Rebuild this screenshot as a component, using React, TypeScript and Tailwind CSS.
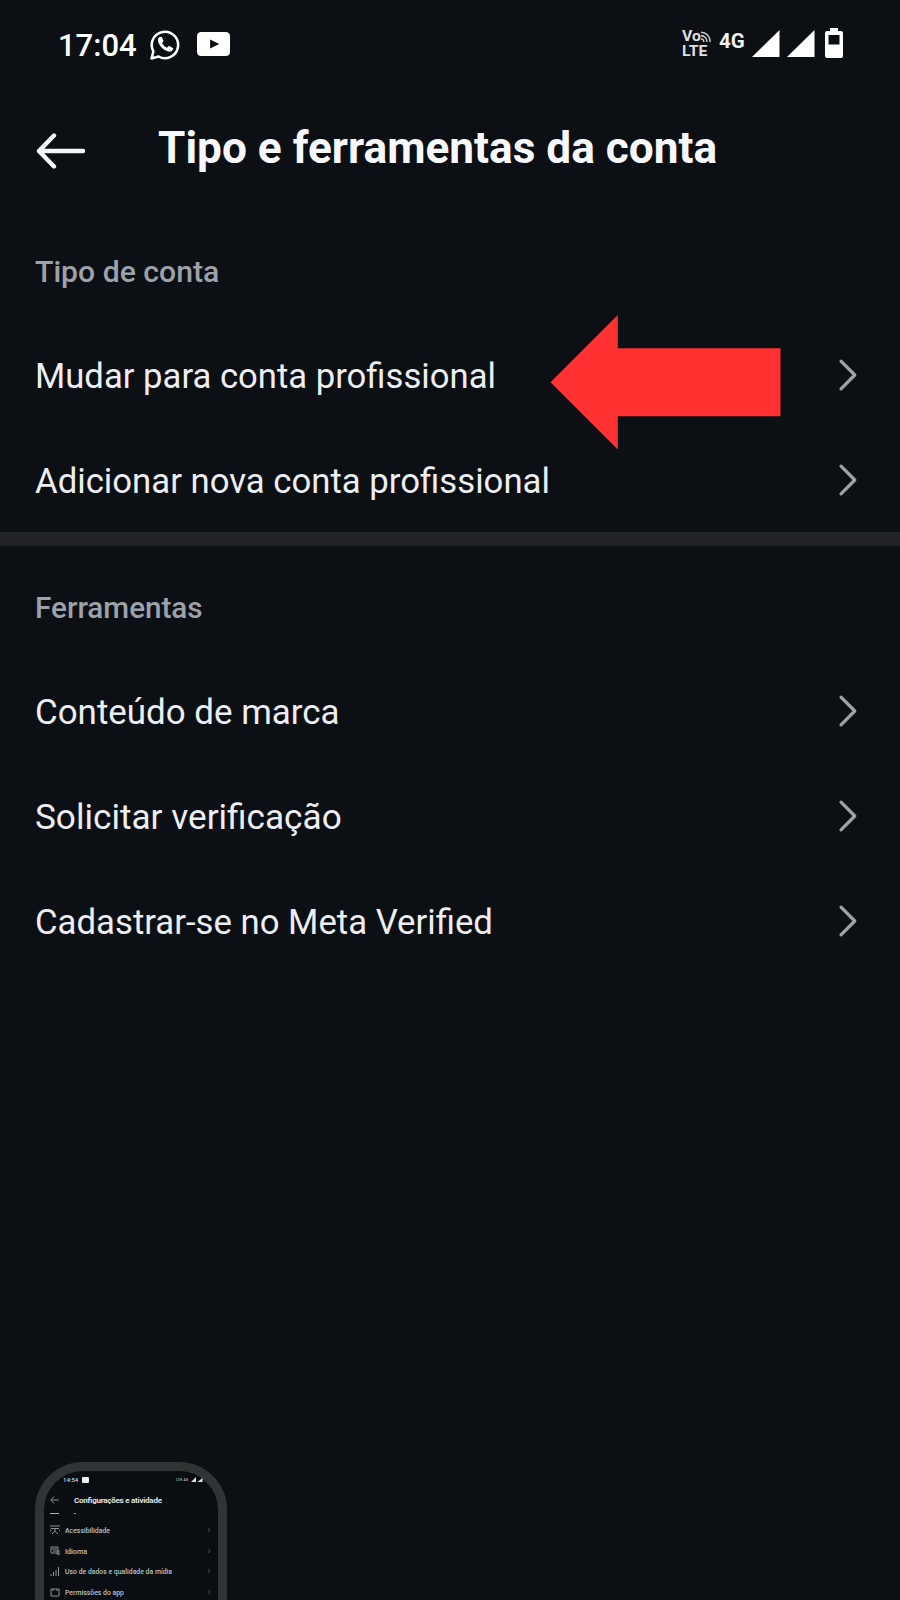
import React from "react";

function Chevron() {
  return (
    <svg className="mb-[1px] h-[34px] w-5 shrink-0" viewBox="0 0 20 34" fill="none">
      <path d="M3 3.2L16.8 17L3 30.8" stroke="#a0a3a6" strokeWidth="3.2" strokeLinecap="round" strokeLinejoin="round" />
    </svg>
  );
}

function Heading({ text, fit }: { text: string; fit: string }) {
  return (
    <h2
      className={`flex h-10 w-max origin-left items-center text-[30px] leading-none font-medium whitespace-nowrap text-[#9da1aa] ${fit}`}
    >
      {text}
    </h2>
  );
}

function Row({ label, fit, children }: { label: string; fit: string; children?: React.ReactNode }) {
  return (
    <li className="relative flex h-[105px] items-center justify-between pr-[42px] pl-[35px]">
      <span className={`origin-left pt-[2px] text-[35.6px] leading-none whitespace-nowrap text-[#eceef1] ${fit}`}>
        {label}
      </span>
      <Chevron />
      {children}
    </li>
  );
}

function PointerArrow() {
  return (
    <svg className="absolute top-[-9px] left-[550px] h-[136px] w-[231px]" viewBox="0 0 231 136">
      <path d="M0.5 68.3L67.8 1V34.3H230.5V102.3H67.8V135.6Z" fill="#ff3131" />
    </svg>
  );
}

function Signal() {
  return (
    <svg className="mb-[3px] h-7 w-7" viewBox="0 0 28 28">
      <path d="M0 27L27.5 0V27Z" fill="#fff" />
    </svg>
  );
}

function StatusBar() {
  return (
    <header className="flex h-[90px] items-center justify-between pr-[57px] pl-[58px] text-white">
      <div className="flex items-center">
        <span className="w-[79px] text-[31px] leading-none font-medium whitespace-nowrap">17:04</span>
        <svg className="mb-[2px] ml-[13px] h-[31px] w-[31px]" viewBox="0 0 31 31" fill="none">
          <path
            d="M1.5 29.5L3.4 22.4A13.2 13.2 0 1 1 8.5 27.5Z"
            stroke="#fff"
            strokeWidth="2.5"
            strokeLinejoin="round"
          />
          <path
            d="M10.5 7.8C8 8.4 7.4 11.4 8.6 14C10.5 18.2 14 21.4 18.3 22.6C20.8 23.3 23.2 21.4 23.2 19.2L19 16.8L16.9 18.8C14.7 17.8 13 16.1 12.1 14.1L13.5 12.1L11.9 8Z"
            fill="#fff"
          />
        </svg>
        <svg className="mb-[2px] ml-[16px] h-6 w-[33px]" viewBox="0 0 34 24" preserveAspectRatio="none">
          <path
            fillRule="evenodd"
            d="M4.5 0H29.5Q34 0 34 4.5V19.5Q34 24 29.5 24H4.5Q0 24 0 19.5V4.5Q0 0 4.5 0ZM13.5 7.5V16.5L23 12Z"
            fill="#fff"
          />
        </svg>
      </div>
      <div className="flex items-center">
        <div className="mr-[8px] mb-[2px] flex w-[29px] origin-left scale-x-[1.13] flex-col text-[14px] leading-[15px] font-bold text-[#dddee0]">
          <div className="flex h-[14px] items-center">
            <span className="w-[16px]">Vo</span>
            <svg className="h-3 w-[10px]" viewBox="0 0 12 12" preserveAspectRatio="none" fill="none" stroke="#c5c7ca" strokeWidth="1.6">
              <path d="M1 1.2C6.5 1.2 10.8 5.5 10.8 11M1 4.6C4.5 4.6 7.4 7.5 7.4 11M1 8C2.7 8 4 9.3 4 11" />
            </svg>
          </div>
          <span>LTE</span>
        </div>
        <span className="mr-[2px] w-[31px] pb-2 text-[20.5px] leading-none font-bold text-[#f0f1f2]">4G</span>
        <Signal />
        <span className="w-[7px]" />
        <Signal />
        <svg className="mb-[4px] ml-[10px] h-[30px] w-[18px]" viewBox="0 0 18 30">
          <path fillRule="evenodd" d="M5 0H13V3H16Q18 3 18 5V28Q18 30 16 30H2Q0 30 0 28V5Q0 3 2 3H5ZM3.5 7V16.5H14.5V7Z" fill="#fff" />
        </svg>
      </div>
    </header>
  );
}

function MiniChevron() {
  return (
    <svg className="h-1.5 w-1" viewBox="0 0 4 6" fill="none" stroke="#4b5055">
      <path d="M1 0.8L3 3L1 5.2" />
    </svg>
  );
}

const miniItems = [
  {
    label: "Acessibilidade",
    width: 45,
    icon: <path d="M0 1H10M1 3.5H9M5 3.5V6M2 9L5 6L8 9M0 4V7M10 4V7" />,
  },
  { label: "Idioma", width: 22, icon: <path d="M1 1H8V7H1ZM2 3H7M3 5H9V9L6 7" /> },
  {
    label: "Uso de dados e qualidade da mídia",
    width: 107,
    icon: <path d="M1 8V10M3.5 6V10M6 4V10M8.5 1V10" />,
  },
  { label: "Permissões do app", width: 59, icon: <path d="M1 2H9V9H1ZM3 2V4M7 2V4" /> },
];

function PhonePreview() {
  return (
    <div className="ml-[35px] h-[138px] w-[192px] shrink-0 overflow-hidden">
      <div className="h-[300px] w-[192px] rounded-[48px] border-[9.5px] border-[#303435] bg-[#0a0d11] text-[#d5d8da]">
        <div className="flex h-[17px] items-center justify-between pr-[15px] pl-[19px]">
          <div className="flex items-center gap-[3px] text-[6px] leading-none font-medium">
            <span className="w-[16px]">14:54</span>
            <span className="h-[6px] w-[7px] rounded-[1px] bg-[#eceeef]" />
          </div>
          <div className="flex items-center gap-px text-[4px] leading-none whitespace-nowrap">
            <span className="w-[14px]">LTE 4G</span>
            <svg className="h-[5px] w-3" viewBox="0 0 12 5" fill="#dfe1e3">
              <path d="M0 5L5 0V5ZM6.5 5L11.5 1V5Z" />
            </svg>
          </div>
        </div>
        <div className="flex h-[24px] items-center pl-[6px]">
          <svg className="h-2 w-2.5" viewBox="0 0 10 8" fill="none" stroke="#858b90">
            <path d="M4 0.5L0.8 4L4 7.5M1 4H9" />
          </svg>
          <svg className="ml-[14px] h-3 w-[90px]" viewBox="0 0 90 12">
            <text x="0" y="8.5" textLength="88" fontSize="8" fontWeight="700" fill="#e1e4e6">
              Configurações e atividade
            </text>
          </svg>
        </div>
        <div className="flex h-[2px] items-center pl-[6px]">
          <span className="h-px w-[9px] bg-[#aeb2b5]" />
          <span className="ml-[15px] h-px w-[2px] bg-[#8d9194]" />
        </div>
        <ul className="mt-[6px]">
          {miniItems.map((item) => (
            <li key={item.label} className="flex h-[20.5px] items-center pr-[7px] pl-[6px]">
              <svg className="h-2.5 w-2.5" viewBox="0 0 10 10" fill="none" stroke="#8d9296">
                {item.icon}
              </svg>
              <svg className="ml-[5px] h-3 w-[120px]" viewBox="0 0 120 12">
                <text
                  x="0"
                  y="8.5"
                  fontSize="7"
                  fontWeight="500"
                  fill="#bdc1c4"
                  textLength={item.width}
                  lengthAdjust="spacingAndGlyphs"
                >
                  {item.label}
                </text>
              </svg>
              <span className="flex-1" />
              <MiniChevron />
            </li>
          ))}
        </ul>
      </div>
    </div>
  );
}

export default function App() {
  return (
    <main className="flex h-[1600px] w-[900px] flex-col overflow-hidden bg-[#0c0f14] font-['Roboto',sans-serif]">
      <StatusBar />
      <div className="flex h-[116px] items-center pl-[36px]">
        <svg className="mt-[6px] h-10 w-[50px]" viewBox="0 0 50 40" fill="none">
          <path
            d="M18 4.5L3 20L18 35.5M3 20H47"
            stroke="#f4f6f8"
            strokeWidth="4.4"
            strokeLinecap="round"
            strokeLinejoin="round"
          />
        </svg>
        <h1 className="ml-[72px] text-[44.2px] leading-none font-bold whitespace-nowrap text-[#f7f8fa]">
          Tipo e ferramentas da conta
        </h1>
      </div>
      <section className="pt-[46px]">
        <div className="pl-[35px]">
          <Heading text="Tipo de conta" fit="scale-x-[1.006]" />
        </div>
        <ul className="pt-[31px]">
          <Row label="Mudar para conta profissional" fit="scale-x-[0.974]">
            <PointerArrow />
          </Row>
          <Row label="Adicionar nova conta profissional" fit="scale-x-[0.976]" />
        </ul>
      </section>
      <div className="mt-[-1px] h-[14px] shrink-0 bg-[#222327]" />
      <section className="pt-[42px]">
        <div className="pl-[35px]">
          <Heading text="Ferramentas" fit="scale-x-[0.988]" />
        </div>
        <ul className="pt-[31px]">
          <Row label="Conteúdo de marca" fit="scale-x-[0.981]" />
          <Row label="Solicitar verificação" fit="scale-x-[0.988]" />
          <Row label="Cadastrar-se no Meta Verified" fit="scale-x-[0.976]" />
        </ul>
      </section>
      <div className="flex-1" />
      <PhonePreview />
    </main>
  );
}
